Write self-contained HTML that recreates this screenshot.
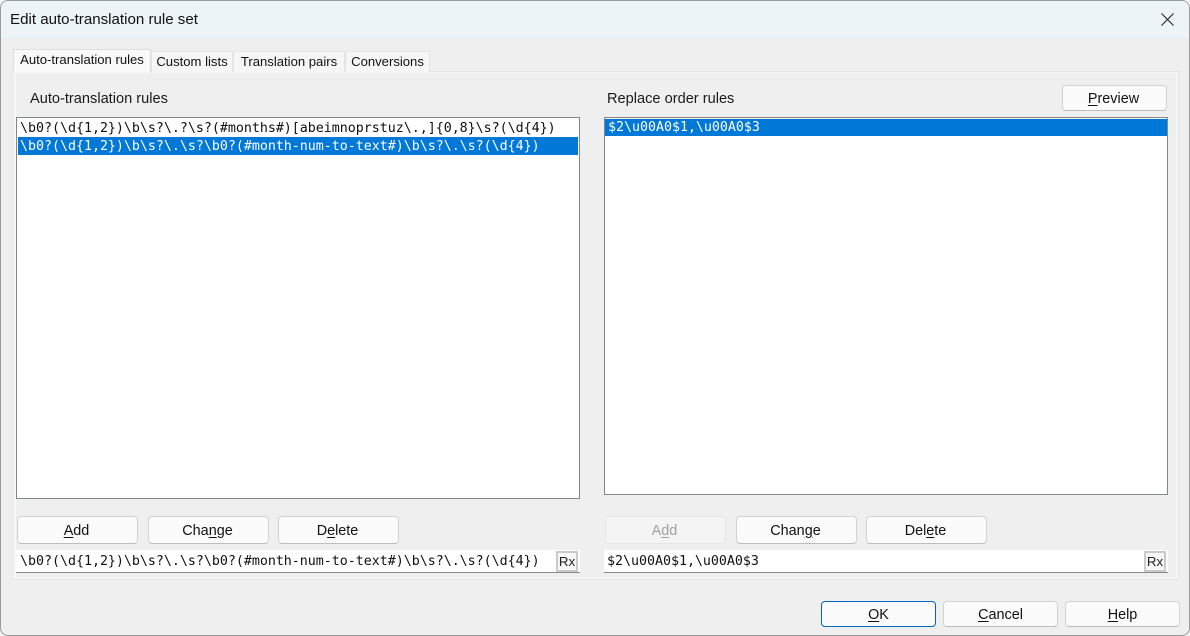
<!DOCTYPE html>
<html><head><meta charset="utf-8">
<style>
html,body{margin:0;padding:0;width:1190px;height:636px;overflow:hidden;background:#f4f4f4;}
*{box-sizing:border-box;}
body{font-family:"Liberation Sans",sans-serif;font-size:14.6px;color:#1a1a1a;}
.a{position:absolute;white-space:nowrap;}
.win{left:0;top:0;width:1190px;height:636px;background:#efefef;border:1px solid #9a9a9a;border-radius:8px;overflow:hidden;}
.title{left:1px;top:1px;width:1188px;height:37px;background:#edf4f7;border-radius:7px 7px 0 0;}
.tab{background:#f6f6f6;border:1px solid #e4e4e4;border-bottom:none;text-align:center;font-size:13.1px;color:#111;}
.panel{background:#f5f5f5;border:1px solid #e6e6e6;}
.list{background:#fff;border:1px solid #82878c;}
.mono{font-family:"DejaVu Sans Mono",monospace;font-size:13.33px;letter-spacing:-0.03px;color:#111;line-height:19px;}
.sel{background:#0078d7;color:#fff;}
.btn{background:#fbfbfb;border:1px solid #d2d2d2;border-bottom-color:#bdbdbd;border-radius:4px;text-align:center;font-size:14.4px;color:#111;padding-right:2px;}
.edit{background:#fff;border-bottom:1px solid #8a8a8a;}
.rx{background:#f7f7f7;border:2px solid #cacaca;font-size:13.3px;text-align:center;line-height:17px;color:#222;}
u{text-underline-offset:2px;}
</style></head><body>
<div class="a win"></div>
<div class="a title"></div>
<div class="a" style="left:10px;top:11px;font-size:15.1px;line-height:18px;color:#111;">Edit auto-translation rule set</div>
<svg class="a" style="left:1160px;top:12px" width="15" height="15" viewBox="0 0 15 15"><path d="M1.5 1.5L13.5 13.5M13.5 1.5L1.5 13.5" stroke="#222" stroke-width="1.1" fill="none"/></svg>

<div class="a panel" style="left:12px;top:71px;width:1167px;height:509px;"></div>
<div class="a" style="left:16px;top:73px;width:1160px;height:504px;background:#efefef;"></div>
<div class="a tab" style="left:151px;top:51px;width:82px;height:21px;line-height:19px;">Custom lists</div>
<div class="a tab" style="left:233px;top:51px;width:112px;height:21px;line-height:19px;">Translation pairs</div>
<div class="a tab" style="left:345px;top:51px;width:85px;height:21px;line-height:19px;">Conversions</div>
<div class="a tab" style="left:13px;top:49px;width:138px;height:24px;line-height:19px;background:#f9f9f9;border-color:#dcdcdc;border-bottom:none;">Auto-translation rules</div>

<div class="a" style="left:30px;top:90px;line-height:18px;">Auto-translation rules</div>
<div class="a" style="left:607px;top:90px;line-height:18px;">Replace order rules</div>
<div class="a btn" style="left:1062px;top:85px;width:105px;height:26px;line-height:27px;"><u>P</u>review</div>

<div class="a list" style="left:16px;top:117px;width:564px;height:382px;"></div>
<div class="a mono" style="left:18px;top:119px;width:560px;height:18px;padding-left:2px;">\b0?(\d{1,2})\b\s?\.?\s?(#months#)[abeimnoprstuz\.,]{0,8}\s?(\d{4})</div>
<div class="a mono sel" style="left:18px;top:137px;width:560px;height:18px;padding-left:2px;">\b0?(\d{1,2})\b\s?\.\s?\b0?(#month-num-to-text#)\b\s?\.\s?(\d{4})</div>

<div class="a list" style="left:604px;top:117px;width:564px;height:378px;"></div>
<div class="a mono sel" style="left:605px;top:119px;width:562px;height:17px;padding-left:3px;line-height:18px;">$2\u00A0$1,\u00A0$3</div>

<div class="a btn" style="left:17px;top:516px;width:121px;height:28px;line-height:29px;"><u>A</u>dd</div>
<div class="a btn" style="left:148px;top:516px;width:121px;height:28px;line-height:29px;">Cha<u>n</u>ge</div>
<div class="a btn" style="left:278px;top:516px;width:121px;height:28px;line-height:29px;">D<u>e</u>lete</div>

<div class="a btn" style="left:605px;top:516px;width:121px;height:28px;line-height:29px;background:#f4f4f4;border-color:#e6e6e6;color:#a0a0a0;">A<u>d</u>d</div>
<div class="a btn" style="left:736px;top:516px;width:121px;height:28px;line-height:29px;">Chan<u>g</u>e</div>
<div class="a btn" style="left:866px;top:516px;width:121px;height:28px;line-height:29px;">Del<u>e</u>te</div>

<div class="a edit" style="left:16px;top:550px;width:564px;height:23px;"></div>
<div class="a mono" style="left:20px;top:552px;">\b0?(\d{1,2})\b\s?\.\s?\b0?(#month-num-to-text#)\b\s?\.\s?(\d{4})</div>
<div class="a rx" style="left:556px;top:551px;width:22px;height:21px;">Rx</div>

<div class="a edit" style="left:604px;top:550px;width:564px;height:23px;"></div>
<div class="a mono" style="left:607px;top:552px;">$2\u00A0$1,\u00A0$3</div>
<div class="a rx" style="left:1144px;top:551px;width:22px;height:21px;">Rx</div>

<div class="a btn" style="left:821px;top:601px;width:115px;height:26px;line-height:27px;border:1px solid #0067c0;padding-right:0;"><u>O</u>K</div>
<div class="a btn" style="left:943px;top:601px;width:115px;height:26px;line-height:27px;padding-right:0;"><u>C</u>ancel</div>
<div class="a btn" style="left:1065px;top:601px;width:115px;height:26px;line-height:27px;padding-right:0;"><u>H</u>elp</div>
</body></html>
